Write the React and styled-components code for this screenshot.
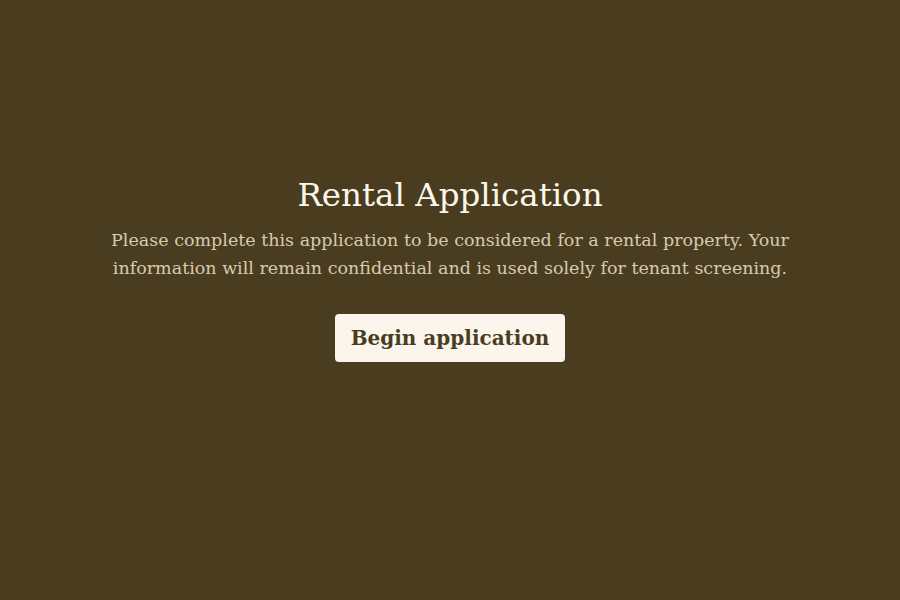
import React from "react";
import styled, { createGlobalStyle } from "styled-components";

const GlobalStyle = createGlobalStyle`
  html, body {
    margin: 0;
    padding: 0;
    background: #4a3d1f;
  }
  * { box-sizing: border-box; }
`;

const Page = styled.main`
  min-height: 100vh;
  display: flex;
  flex-direction: column;
  align-items: center;
  padding-top: 174px;
  font-family: "DejaVu Serif", "Liberation Serif", serif;
  text-align: center;
`;

const Title = styled.h1`
  margin: 0;
  font-size: 32.5px;
  font-weight: 400;
  line-height: 42px;
  color: #fbf6ec;
`;

const Lead = styled.p`
  margin: 10px 0 0;
  max-width: 720px;
  font-size: 17.5px;
  line-height: 28px;
  color: #d6cab2;
`;

const StartButton = styled.button`
  margin-top: 32px;
  height: 48px;
  padding: 0 16px;
  border: none;
  border-radius: 4px;
  background: #fbf5ec;
  color: #4a3d1f;
  font-family: inherit;
  font-size: 20px;
  font-weight: 700;
  cursor: pointer;
`;

export default function App() {
  return (
    <>
      <GlobalStyle />
      <Page>
        <Title>Rental Application</Title>
        <Lead>
          Please complete this application to be considered for a rental property. Your
          information will remain confidential and is used solely for tenant screening.
        </Lead>
        <StartButton type="button">Begin application</StartButton>
      </Page>
    </>
  );
}
